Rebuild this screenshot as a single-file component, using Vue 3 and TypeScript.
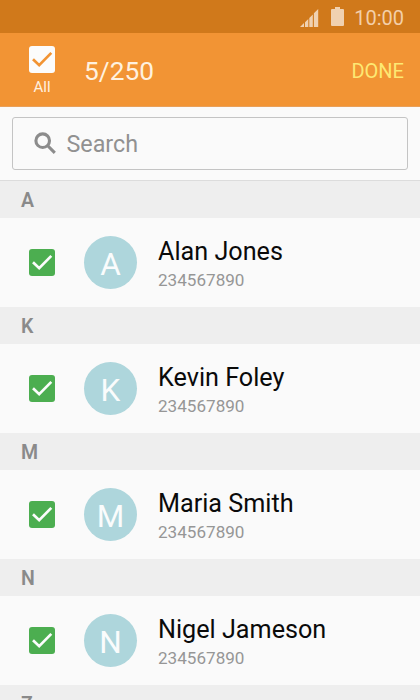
<script setup lang="ts">
interface Contact {
  name: string
  phone: string
}

interface Section {
  letter: string
  contacts: Contact[]
}

const sections: Section[] = [
  { letter: 'A', contacts: [{ name: 'Alan Jones', phone: '234567890' }] },
  { letter: 'K', contacts: [{ name: 'Kevin Foley', phone: '234567890' }] },
  { letter: 'M', contacts: [{ name: 'Maria Smith', phone: '234567890' }] },
  { letter: 'N', contacts: [{ name: 'Nigel Jameson', phone: '234567890' }] },
  { letter: 'Z', contacts: [] },
]
</script>

<template>
  <div class="screen">
    <div class="status-bar">
      <svg class="signal" width="19" height="18" viewBox="0 0 19 18">
        <path d="M0 18 L4 14.1 V18Z M5 13.2 L8.3 9.9 V18 H5Z M9.3 9 L12.8 5.4 V18 H9.3Z M13.9 4.3 L18.2 0 V18 H13.9Z" />
      </svg>
      <svg class="battery" width="13" height="19" viewBox="0 0 13 19">
        <path d="M4 0H9V2H12Q13 2 13 3V18Q13 19 12 19H1Q0 19 0 18V3Q0 2 1 2H4Z" />
      </svg>
      <span class="time">10:00</span>
    </div>

    <header class="app-bar">
      <div class="select-all">
        <span class="check light">
          <svg width="26" height="27" viewBox="0 0 26 27"><path d="M4 13.2L10.2 19.2L22.3 6.9" /></svg>
        </span>
        <span class="all-label">All</span>
      </div>
      <span class="count">5/250</span>
      <span class="done">DONE</span>
    </header>

    <div class="search-area">
      <div class="search-box">
        <svg class="search-icon" width="23" height="23" viewBox="0 0 23 23">
          <circle cx="8.7" cy="8.7" r="6.8" />
          <path d="M13.5 13.5L20.8 20.8" />
        </svg>
        <span class="placeholder">Search</span>
      </div>
    </div>

    <section v-for="s in sections" :key="s.letter">
      <div class="section-head">{{ s.letter }}</div>
      <div v-for="c in s.contacts" :key="c.name" class="row">
        <span class="check">
          <svg width="26" height="27" viewBox="0 0 26 27"><path d="M4 13.2L10.2 19.2L22.3 6.9" /></svg>
        </span>
        <span class="avatar">{{ c.name.charAt(0) }}</span>
        <div class="info">
          <span class="name">{{ c.name }}</span>
          <span class="phone">{{ c.phone }}</span>
        </div>
      </div>
    </section>
  </div>
</template>

<style>
body {
  overflow: hidden;
}
</style>

<style scoped>
.screen {
  width: 420px;
  height: 700px;
  overflow: hidden;
  background: #fafafa;
  font-family: Roboto, "Liberation Sans", sans-serif;
}
.screen * {
  box-sizing: border-box;
}
svg {
  display: block;
  flex: none;
}
.status-bar {
  height: 33px;
  background: #d0791b;
  display: flex;
  align-items: flex-start;
  justify-content: flex-end;
  padding: 7px 16px 0 0;
}
.signal {
  fill: #f0d1b0;
  margin: 2px 12px 0 0;
}
.battery {
  fill: #f0d1b0;
  margin-right: 10px;
}
.time {
  font-size: 20px;
  line-height: 23px;
  color: #f3cfa9;
}
.app-bar {
  height: 74px;
  background: #f29434;
  display: flex;
  align-items: flex-start;
  border-bottom: 1px solid #e9a05a;
}
.select-all {
  width: 84px;
  display: flex;
  flex-direction: column;
  align-items: center;
  padding-top: 13px;
}
.check {
  width: 26px;
  height: 27px;
  flex: none;
  border-radius: 3px;
  background: #4cae50;
}
.check path {
  fill: none;
  stroke: #fcfcfc;
  stroke-width: 2.7;
}
.check.light {
  background: #fcfcfc;
}
.check.light path {
  stroke: #f29434;
}
.all-label {
  font-size: 15px;
  line-height: 18px;
  margin-top: 5px;
  color: #fff1e0;
}
.count {
  flex: 1;
  font-size: 26.3px;
  line-height: 30px;
  margin-top: 23px;
  color: #fff1df;
}
.done {
  font-size: 20px;
  line-height: 24px;
  margin: 26px 16px 0 0;
  color: #fde873;
}
.search-area {
  height: 74px;
  border-bottom: 1px solid #dcdcdc;
  padding: 10px 12px;
}
.search-box {
  height: 53px;
  border: 1px solid #c4c4c4;
  border-bottom-width: 1.5px;
  border-radius: 3px;
  display: flex;
  align-items: center;
  padding-left: 21px;
  gap: 9.5px;
}
.placeholder {
  font-size: 23.3px;
  line-height: 28px;
  padding-top: 1px;
  color: #919191;
}
.search-icon {
  fill: none;
  stroke: #8c8c8c;
  stroke-width: 3.1;
}
.section-head {
  height: 37px;
  padding: 1px 0 0 21px;
  background: #eeeeee;
  font-size: 19.5px;
  line-height: 38px;
  font-weight: 600;
  color: #8a8a8a;
}
.row {
  height: 89px;
  display: flex;
  align-items: center;
  padding-left: 29px;
}
.avatar {
  width: 53px;
  height: 53px;
  margin-left: 29px;
  border-radius: 50%;
  background: #aed6dc;
  color: #fafcfc;
  font-size: 31.5px;
  font-weight: 400;
  line-height: 57px;
  text-align: center;
}
.info {
  display: flex;
  flex-direction: column;
  margin-left: 21px;
}
.name {
  font-size: 25.2px;
  line-height: 30px;
  padding-top: 1px;
  margin-bottom: -1px;
  color: #0a0a0a;
}
.phone {
  font-size: 17.1px;
  line-height: 20px;
  margin-top: 4px;
  color: #969696;
}
</style>
